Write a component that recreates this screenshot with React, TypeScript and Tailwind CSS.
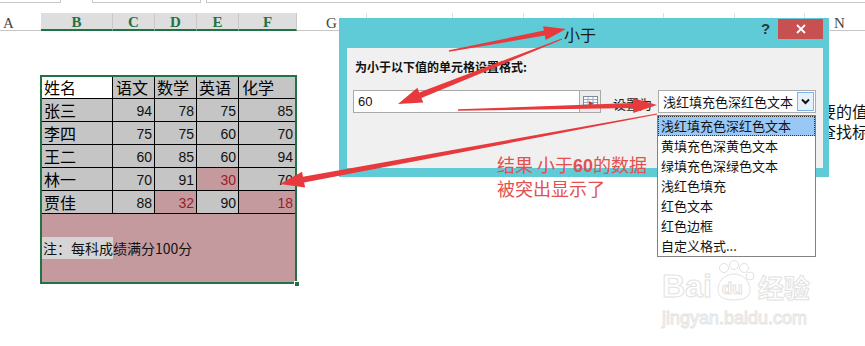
import React from "react";

type P = [number, number];
function arrow(t: P, h: P, w0: number, w1: number, hw: number, hl: number) {
  const dx = h[0] - t[0];
  const dy = h[1] - t[1];
  const L = Math.hypot(dx, dy);
  const ux = dx / L;
  const uy = dy / L;
  const nx = -uy;
  const ny = ux;
  const bx = h[0] - ux * hl;
  const by = h[1] - uy * hl;
  const pts: P[] = [
    [t[0] + (nx * w0) / 2, t[1] + (ny * w0) / 2],
    [bx + (nx * w1) / 2, by + (ny * w1) / 2],
    [bx + (nx * hw) / 2, by + (ny * hw) / 2],
    h,
    [bx - (nx * hw) / 2, by - (ny * hw) / 2],
    [bx - (nx * w1) / 2, by - (ny * w1) / 2],
    [t[0] - (nx * w0) / 2, t[1] - (ny * w0) / 2],
  ];
  return pts.map((p) => p.map((v) => v.toFixed(1)).join(",")).join(" ");
}

const cols = [
  { l: "A", w: "w-[41px]", band: false },
  { l: "B", w: "w-[72px]", band: true },
  { l: "C", w: "w-[42px]", band: true },
  { l: "D", w: "w-[42px]", band: true },
  { l: "E", w: "w-[42px]", band: true },
  { l: "F", w: "w-[58px]", band: true },
  { l: "G", w: "w-[70px]", band: false },
  { l: "H", w: "w-[86px]", band: false },
  { l: "I", w: "w-[71px]", band: false },
  { l: "J", w: "w-[70px]", band: false },
  { l: "K", w: "w-[70px]", band: false },
  { l: "L", w: "w-[71px]", band: false },
  { l: "M", w: "w-[70px]", band: false },
  { l: "N", w: "w-[70px]", band: false },
];

const cellW = ["w-[71px]", "w-[42px]", "w-[42px]", "w-[42px]", "w-[56px]"];

type Cell = { v: string; pink?: boolean };
const rows: Cell[][] = [
  [{ v: "张三" }, { v: "94" }, { v: "78" }, { v: "75" }, { v: "85" }],
  [{ v: "李四" }, { v: "75" }, { v: "75" }, { v: "60" }, { v: "70" }],
  [{ v: "王二" }, { v: "60" }, { v: "85" }, { v: "60" }, { v: "94" }],
  [{ v: "林一" }, { v: "70" }, { v: "91" }, { v: "30", pink: true }, { v: "70" }],
  [{ v: "贾佳" }, { v: "88" }, { v: "32", pink: true }, { v: "90" }, { v: "18", pink: true }],
];

const menu = [
  "浅红填充色深红色文本",
  "黄填充色深黄色文本",
  "绿填充色深绿色文本",
  "浅红色填充",
  "红色文本",
  "红色边框",
  "自定义格式...",
];

export default function App() {
  return (
    <div className="relative w-[865px] h-[346px] overflow-hidden bg-white font-['Noto_Sans_CJK_SC',sans-serif]">
      {/* top toolbar remnants */}
      <div className="flex h-[3px]">
        <div className="w-[61px] border-r border-b border-[#c8c8c8]" />
        <div className="ml-[31px] w-[109px] border-l border-r border-b border-[#c8c8c8]" />
        <div className="ml-[5px] flex-1 border-l border-b border-[#c8c8c8]" />
      </div>

      {/* column headers */}
      <div className="mt-[10px] flex h-[18px]">
        {cols.map((c) => (
          <div
            key={c.l}
            className={
              c.band
                ? `${c.w} shrink-0 h-[18px] pt-[3px] bg-[#dedede] border-b-2 border-b-[#217346] border-r border-r-[#c9c9c9] text-center text-[15px] leading-[13px] font-bold text-[#217346] font-['Liberation_Serif',serif]`
                : c.l === "A"
                ? `${c.w} shrink-0 h-[18px] pt-[3px] border-b border-b-[#c6c6c6] pl-[3px] text-[15px] leading-[14px] text-[#444] font-['Liberation_Serif',serif]`
                : `${c.w} shrink-0 h-[18px] pt-[3px] border-b border-b-[#c6c6c6] border-r border-r-[#dcdcdc] text-center text-[15px] leading-[14px] text-[#444] font-['Liberation_Serif',serif]`
            }
          >
            {c.l}
          </div>
        ))}
      </div>

      {/* table */}
      <div className="ml-[40px] mt-[44px] w-[257px] h-[209px] border-2 border-[#217346] flex flex-col relative">
        <div className="flex h-[22px] border-b border-black text-[16px] leading-[21px]">
          <div className={`${cellW[0]} bg-white border-r border-black pl-[2px]`}>姓名</div>
          <div className={`${cellW[1]} bg-[#c5c5c5] border-r border-black pl-[3px]`}>语文</div>
          <div className={`${cellW[2]} bg-[#c5c5c5] border-r border-black pl-[2px]`}>数学</div>
          <div className={`${cellW[3]} bg-[#c5c5c5] border-r border-black pl-[2px]`}>英语</div>
          <div className={`${cellW[4]} bg-[#c5c5c5] pl-[3px]`}>化学</div>
        </div>
        {rows.map((r, i) => (
          <div key={i} className="flex h-[23px] border-b border-black">
            {r.map((c, j) =>
              j === 0 ? (
                <div key={j} className={`${cellW[0]} bg-[#c5c5c5] border-r border-black pl-[2px] text-[16px] leading-[22px]`}>
                  {c.v}
                </div>
              ) : (
                <div
                  key={j}
                  className={`${cellW[j]} ${c.pink ? "bg-[#c49a9f] text-[#9a1d2b]" : "bg-[#c5c5c5] text-[#111]"} ${j < 4 ? "border-r border-black" : ""} pr-[2px] text-right text-[14px] leading-[24px] font-['Liberation_Sans',sans-serif]`}
                >
                  {c.v}
                </div>
              )
            )}
          </div>
        ))}
        <div className="flex-1 bg-[#c49a9f] pt-[23px]">
          <div className="h-[22px] bg-[linear-gradient(to_right,#d5d5d5_71px,transparent_71px)] pl-[1px] text-[14px] leading-[22px] text-[#111]">
            注：每科成绩满分100分
          </div>
        </div>
        <div className="absolute right-[-5px] bottom-[-5px] w-[6px] h-[6px] bg-[#217346] border border-white" />
      </div>

      {/* text behind dialog on the right */}
      <div className="absolute left-[820px] top-[101px] text-[16px] leading-[20px] text-[#111] whitespace-nowrap">
        <div>要的值</div>
        <div>查找标</div>
      </div>

      {/* dialog */}
      <div className="absolute left-[339px] top-[18px] w-[490px] h-[159px] bg-[#5ecbd7] flex flex-col">
        <div className="h-[30px] flex shrink-0">
          <div className="w-[64px]" />
          <div className="flex-1 text-center pt-[6px] text-[16px] leading-[20px] text-[#1b1b1b]">小于</div>
          <div className="flex items-start">
            <div className="w-[17px] pt-[1px] text-center text-[15px] leading-[20px] font-bold text-[#2b3a3f] font-['Liberation_Sans',sans-serif]">?</div>
            <div className="ml-[4px] mt-[1px] w-[45px] h-[20px] bg-[#c75050] flex items-center justify-center">
              <svg width="10" height="10" viewBox="0 0 10 10">
                <path d="M1 1 L9 9 M9 1 L1 9" stroke="white" strokeWidth="1.8" />
              </svg>
            </div>
          </div>
          <div className="w-[6px]" />
        </div>
        <div className="ml-[8px] mr-[6px] h-[120px] bg-[#f0f0f0] flex flex-col">
          <div className="pl-[8px] pt-[11px] text-[12px] leading-[16px] font-bold text-[#111]">
            为小于以下值的单元格设置格式:
          </div>
          <div className="mt-[15px] ml-[6px] flex items-center">
            <div className="w-[227px] h-[23px] bg-white border border-[#a9a9a9] pl-[4px] text-[13px] leading-[21px] text-[#111] font-['Liberation_Sans',sans-serif]">
              60
            </div>
            <div className="w-[21px] h-[23px] bg-[#ececec] border border-l-0 border-[#a9a9a9] flex items-center justify-center">
              <svg width="15" height="12" viewBox="0 0 15 12">
                <rect x="0.5" y="0.5" width="14" height="11" fill="#fff" stroke="#7a8aa0" />
                <path d="M1 3.5 H14 M1 6.5 H14 M1 9 H14 M5 1 V11 M10 1 V11" stroke="#9aaac0" strokeWidth="1" />
                <path d="M6 5 L11 8 L8.5 8.5 L9.5 11 L8.5 11.3 L7.5 9 L6 10.5 Z" fill="#c0392b" />
              </svg>
            </div>
            <div className="ml-[12px] w-[45px] pt-[5px] text-[13px] leading-[18px] text-[#222]">设置为</div>
            <div className="w-[158px] h-[23px] bg-white border border-[#acacac] flex items-center">
              <div className="flex-1 pl-[4px] text-[13px] leading-[21px] text-[#111] whitespace-nowrap">浅红填充色深红色文本</div>
              <div className="mr-[1px] w-[17px] h-[19px] bg-[#e5f1fb] border border-[#7eb4ea] flex items-center justify-center">
                <svg width="9" height="7" viewBox="0 0 9 7">
                  <path d="M1 1.5 L4.5 5 L8 1.5" stroke="#111" strokeWidth="2" fill="none" />
                </svg>
              </div>
            </div>
          </div>
        </div>
      </div>

      {/* dropdown list */}
      <div className="absolute left-[657px] top-[115px] w-[159px] h-[142px] bg-white border border-[#828282] flex flex-col">
        {menu.map((m, i) => (
          <div
            key={m}
            className={
              i === 0
                ? "h-[20px] bg-[#99c8f7] border border-dotted border-[#333] pl-[2px] text-[13px] leading-[18px] text-[#111] whitespace-nowrap"
                : "h-[20px] pl-[3px] text-[13px] leading-[20px] text-[#111] whitespace-nowrap"
            }
          >
            {m}
          </div>
        ))}
      </div>

      {/* red annotation */}
      <div className="absolute left-[497px] top-[153px] text-[18px] leading-[22px] text-[#e2514f] whitespace-nowrap">
        <div>
          结果 小于<span className="font-bold font-['Liberation_Sans',sans-serif]">60</span>的数据
        </div>
        <div>被突出显示了</div>
      </div>

      {/* arrows */}
      <svg className="absolute left-0 top-0 w-[865px] h-[346px] pointer-events-none" viewBox="0 0 865 346">
        <polygon points={arrow([449, 51], [566, 29], 1.5, 5, 14, 22)} fill="#e8393c" />
        <polygon points={arrow([562, 39], [398, 104], 1, 6, 16, 24)} fill="#e8393c" />
        <polygon points={arrow([458, 110], [657, 105], 1.5, 5, 15, 24)} fill="#e8393c" />
        <polygon points={arrow([657, 114], [280, 184], 1, 6, 16, 24)} fill="#e8393c" />
      </svg>

      {/* watermark */}
      <div className="absolute left-[662px] top-[268px] flex flex-col pointer-events-none">
        <div className="flex items-end h-[34px]">
          <div className="text-[32px] leading-[32px] font-bold text-transparent [-webkit-text-stroke:1px_#e2e2e2] font-['Liberation_Sans',sans-serif]">
            Bai
          </div>
          <div className="relative w-[44px] h-[34px]">
            <svg className="absolute left-0 top-[-8px]" width="44" height="42" viewBox="0 0 44 42">
              <circle cx="12" cy="8" r="4.5" fill="none" stroke="#e2e2e2" />
              <circle cx="22" cy="5" r="4.5" fill="none" stroke="#e2e2e2" />
              <circle cx="32" cy="8" r="4.5" fill="none" stroke="#e2e2e2" />
              <circle cx="38" cy="16" r="4" fill="none" stroke="#e2e2e2" />
              <path d="M6 30 C6 18 16 14 22 14 C30 14 38 20 38 30 C38 38 30 40 22 40 C14 40 6 38 6 30 Z" fill="none" stroke="#e2e2e2" />
            </svg>
            <div className="absolute left-[10px] top-[12px] text-[17px] leading-[18px] font-bold text-transparent [-webkit-text-stroke:1px_#e2e2e2] font-['Liberation_Sans',sans-serif]">
              du
            </div>
          </div>
          <div className="ml-[2px] text-[26px] leading-[30px] font-bold text-transparent [-webkit-text-stroke:1px_#e2e2e2]">
            经验
          </div>
        </div>
        <div className="mt-[6px] text-[18px] leading-[20px] text-transparent [-webkit-text-stroke:1px_#e4e4e4] font-['Liberation_Sans',sans-serif]">
          jingyan.baidu.com
        </div>
      </div>
    </div>
  );
}
